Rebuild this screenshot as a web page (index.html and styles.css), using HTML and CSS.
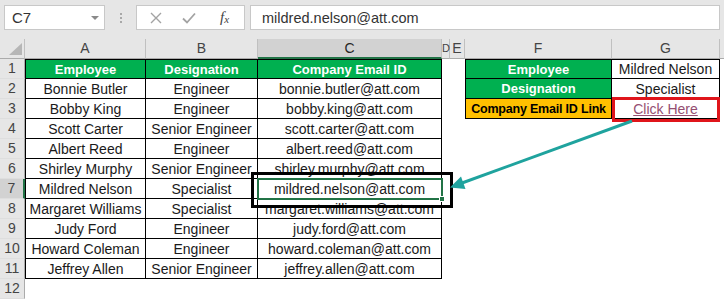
FILE: index.html
```html
<!DOCTYPE html>
<html lang="en">

<head>
    <meta charset="UTF-8">
    <meta name="viewport" content="width=device-width, initial-scale=1.0">
    <title>Hyperlink to email</title>
    <link rel="stylesheet" href="styles.css">
</head>

<body>
    <div class="page">
        <!-- formula bar -->
        <div class="toolbar">
            <div class="namebox">
                <span>C7</span>
                <span class="caret"></span>
            </div>
            <div class="dots"><i></i><i></i><i></i></div>
            <div class="fxbox">
                <svg class="ico" width="12" height="12" viewBox="0 0 12 12">
                    <path d="M1 1 L11 11 M11 1 L1 11" stroke="#a3a3a3" stroke-width="1.4" fill="none" />
                </svg>
                <svg class="ico" width="14" height="12" viewBox="0 0 14 12">
                    <path d="M1 6.5 L5 10.5 L13 1.5" stroke="#a3a3a3" stroke-width="1.8" fill="none" />
                </svg>
                <span class="fx">f<sub>x</sub></span>
            </div>
            <div class="formula">mildred.nelson@att.com</div>
        </div>

        <!-- sheet -->
        <div class="sheet">
            <div class="corner"><span class="tri"></span></div>
            <div class="ch">A</div>
            <div class="ch">B</div>
            <div class="ch sel">C</div>
            <div class="ch narrow">D</div>
            <div class="ch">E</div>
            <div class="ch">F</div>
            <div class="ch">G</div>
            <div class="ch last"></div>

            <div class="rh">1</div>
            <div class="c t l top hd">Employee</div>
            <div class="c t top hd">Designation</div>
            <div class="c t top hd">Company Email ID</div>
            <div></div><div></div>
            <div class="c t l top hd">Employee</div>
            <div class="c t top">Mildred Nelson</div>
            <div></div>

            <div class="rh">2</div>
            <div class="c t l">Bonnie Butler</div>
            <div class="c t">Engineer</div>
            <div class="c t">bonnie.butler@att.com</div>
            <div></div><div></div>
            <div class="c t l hd">Designation</div>
            <div class="c t">Specialist</div>
            <div></div>

            <div class="rh">3</div>
            <div class="c t l">Bobby King</div>
            <div class="c t">Engineer</div>
            <div class="c t">bobby.king@att.com</div>
            <div></div><div></div>
            <div class="c t l or">Company Email ID Link</div>
            <div class="c t"><a class="link" href="mailto:mildred.nelson@att.com">Click Here</a></div>
            <div></div>

            <div class="rh">4</div>
            <div class="c t l">Scott Carter</div>
            <div class="c t">Senior Engineer</div>
            <div class="c t">scott.carter@att.com</div>
            <div></div><div></div><div></div><div></div><div></div>

            <div class="rh">5</div>
            <div class="c t l">Albert Reed</div>
            <div class="c t">Engineer</div>
            <div class="c t">albert.reed@att.com</div>
            <div></div><div></div><div></div><div></div><div></div>

            <div class="rh">6</div>
            <div class="c t l">Shirley Murphy</div>
            <div class="c t">Senior Engineer</div>
            <div class="c t">shirley.murphy@att.com</div>
            <div></div><div></div><div></div><div></div><div></div>

            <div class="rh sel">7</div>
            <div class="c t l">Mildred Nelson</div>
            <div class="c t">Specialist</div>
            <div class="c t">mildred.nelson@att.com</div>
            <div></div><div></div><div></div><div></div><div></div>

            <div class="rh">8</div>
            <div class="c t l">Margaret Williams</div>
            <div class="c t">Specialist</div>
            <div class="c t">margaret.williams@att.com</div>
            <div></div><div></div><div></div><div></div><div></div>

            <div class="rh">9</div>
            <div class="c t l">Judy Ford</div>
            <div class="c t">Engineer</div>
            <div class="c t">judy.ford@att.com</div>
            <div></div><div></div><div></div><div></div><div></div>

            <div class="rh">10</div>
            <div class="c t l">Howard Coleman</div>
            <div class="c t">Engineer</div>
            <div class="c t">howard.coleman@att.com</div>
            <div></div><div></div><div></div><div></div><div></div>

            <div class="rh">11</div>
            <div class="c t l">Jeffrey Allen</div>
            <div class="c t">Senior Engineer</div>
            <div class="c t">jeffrey.allen@att.com</div>
            <div></div><div></div><div></div><div></div><div></div>

            <div class="rh">12</div>
            <div></div><div></div><div></div><div></div><div></div><div></div><div></div><div></div>
        </div>

        <!-- selection and annotations -->
        <div class="selbox"><span class="handle"></span></div>
        <div class="mark"></div>
        <div class="redbox"></div>
        <svg class="arrow" width="724" height="299" viewBox="0 0 724 299">
            <line x1="632" y1="121" x2="462" y2="183" stroke="#1fa39e" stroke-width="3" />
            <polygon points="450,187.5 465.5,189 461,176.5" fill="#1fa39e" />
        </svg>
    </div>
</body>

</html>
```

FILE: styles.css
```css
* {
    padding: 0;
    margin: 0;
    box-sizing: border-box;
}

body {
    width: 724px;
    height: 299px;
    overflow: hidden;
    background-color: #fff;
    font-family: "Liberation Sans", Arial, sans-serif;
    color: #1a1a1a;
}

.page {
    position: relative;
    width: 724px;
    height: 299px;
}

/* formula bar */
.toolbar {
    height: 39px;
    background-color: #e6e6e6;
    display: flex;
    align-items: flex-start;
    padding: 5px 4px 0 4px;
}

.namebox,
.fxbox,
.formula {
    height: 25px;
    background-color: #fff;
    border: 1px solid #c8c8c8;
    display: flex;
    align-items: center;
}

.namebox {
    width: 101px;
    justify-content: space-between;
    padding: 0 5px 0 7px;
    font-size: 15px;
    color: #333;
}

.caret {
    border-left: 4px solid transparent;
    border-right: 4px solid transparent;
    border-top: 4px solid #8a8a8a;
}

.dots {
    width: 31px;
    height: 25px;
    display: flex;
    flex-direction: column;
    align-items: center;
    justify-content: center;
    gap: 2px;
}

.dots i {
    width: 2px;
    height: 2px;
    background-color: #a8a8a8;
}

.fxbox {
    width: 109px;
    padding-left: 13px;
}

.fxbox .ico:nth-child(2) {
    margin-left: 20px;
}

.fx {
    margin-left: 24px;
    font: italic 15px "Liberation Serif", serif;
    color: #444;
}

.fx sub {
    font-size: 11px;
    vertical-align: -1px;
}

.formula {
    flex: 1;
    margin-left: 5px;
    padding-left: 11px;
    font-size: 14.5px;
    color: #333;
}

/* sheet */
.sheet {
    display: grid;
    grid-template-columns: 25px 121px 112px 184px 8px 15px 147px 108px 4px;
    grid-auto-rows: 20px;
}

.corner,
.ch {
    background-color: #e6e6e6;
    border-right: 1px solid #c0c0c0;
    border-bottom: 1px solid #ababab;
}

.corner {
    position: relative;
}

.tri {
    position: absolute;
    right: 2px;
    bottom: 3px;
    border-left: 13px solid transparent;
    border-bottom: 12px solid #b6b6b6;
}

.ch {
    text-align: center;
    font-size: 14px;
    line-height: 19px;
    color: #444;
}

.ch.narrow {
    font-size: 11px;
    letter-spacing: -0.5px;
}

.ch.sel {
    background-color: #d2d2d2;
    border-bottom: 2px solid #217346;
    color: #262626;
}

.ch.last {
    border-right: none;
}

.rh {
    background-color: #e6e6e6;
    border-right: 1px solid #ababab;
    border-bottom: 1px solid #dedede;
    text-align: center;
    font-size: 14px;
    line-height: 19px;
    color: #444;
}

.rh.sel {
    background-color: #d2d2d2;
    border-right: 2px solid #217346;
}

.c {
    display: flex;
    align-items: center;
    justify-content: center;
    white-space: nowrap;
    font-size: 14px;
    color: #1a1a1a;
}

.t {
    border-right: 1px solid #000;
    border-bottom: 1px solid #000;
}

.l {
    border-left: 1px solid #000;
}

.top {
    border-top: 1px solid #000;
}

.hd {
    background-color: #00b050;
    color: #fff;
    font-weight: bold;
    font-size: 13px;
}

.or {
    background-color: #ffc000;
    color: #000;
    font-weight: bold;
    font-size: 12.5px;
    letter-spacing: -0.2px;
}

.link {
    color: #954f72;
    text-decoration: underline;
}

/* selection and annotations */
.selbox {
    position: absolute;
    left: 257px;
    top: 178px;
    width: 186px;
    height: 22px;
    border: 2px solid #217346;
}

.handle {
    position: absolute;
    right: -4px;
    bottom: -4px;
    width: 6px;
    height: 6px;
    background-color: #217346;
    border: 1px solid #fff;
}

.mark {
    position: absolute;
    left: 251px;
    top: 172px;
    width: 202px;
    height: 36px;
    border: 3px solid #000;
}

.redbox {
    position: absolute;
    left: 612px;
    top: 97px;
    width: 108px;
    height: 25px;
    border: 3px solid #e0151b;
}

.arrow {
    position: absolute;
    left: 0;
    top: 0;
    pointer-events: none;
}
```
